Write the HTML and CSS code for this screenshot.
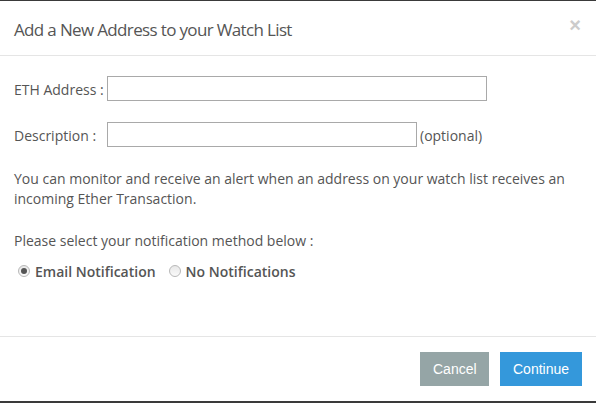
FILE: index.html
```html
<!DOCTYPE html>
<html>
<head>
<meta charset="utf-8">
<link rel="stylesheet" href="styles.css">
</head>
<body>
<div class="modal">
  <div class="modal-header">
    <h4 class="modal-title">Add a New Address to your Watch List</h4>
    <span class="close">&times;</span>
  </div>
  <div class="modal-body">
    <div class="field">
      <label class="lbl">ETH Address :</label>
      <input class="inp inp-long" type="text">
    </div>
    <div class="field">
      <label class="lbl">Description :</label>
      <input class="inp inp-short" type="text">
      <span class="opt">(optional)</span>
    </div>
    <p class="info">You can monitor and receive an alert when an address on your watch list receives an incoming Ether Transaction.</p>
    <p class="select">Please select your notification method below :</p>
    <div class="radios">
      <label class="radio"><span class="dot checked"></span>Email Notification</label>
      <label class="radio"><span class="dot"></span>No Notifications</label>
    </div>
  </div>
  <div class="modal-footer">
    <button class="btn btn-cancel">Cancel</button>
    <button class="btn btn-continue">Continue</button>
  </div>
</div>
</body>
</html>
```
FILE: styles.css
```css
html, body {
  margin: 0;
  padding: 0;
  background: #3a3a3a;
}
body {
  font-family: "Open Sans", "Liberation Sans", sans-serif;
  color: #555;
  width: 596px;
  height: 403px;
  overflow: hidden;
}
.modal {
  margin-top: 1px;
  background: #fff;
  height: 400px;
  display: flex;
  flex-direction: column;
}
.modal-header {
  height: 55px;
  box-sizing: border-box;
  padding: 2px 15px 0 14px;
  border-bottom: 1px solid #e5e5e5;
  display: flex;
  align-items: center;
  justify-content: space-between;
}
.modal-title {
  margin: 0;
  font-size: 17px;
  font-weight: 400;
  color: #555;
  letter-spacing: -0.65px;
}
.close {
  font-family: "Liberation Sans", sans-serif;
  font-size: 20px;
  font-weight: bold;
  color: #cccccc;
  line-height: 1;
  margin-top: -8px;
}
.modal-body {
  flex: 1;
  padding: 20px 14px 0 14px;
  font-size: 14px;
  border-bottom: 1px solid #e5e5e5;
}
.field {
  display: flex;
  align-items: center;
  height: 25px;
  margin-bottom: 21px;
}
.lbl {
  width: 93px;
  flex: none;
  padding-top: 2px;
}
.opt {
  margin-left: 3px;
  padding-top: 2px;
}
.inp {
  box-sizing: border-box;
  height: 25px;
  border: 1px solid #a9a9a9;
  margin: 0;
  padding: 0 4px;
}
.inp-long { width: 380px; }
.inp-short { width: 310px; }
.info {
  margin: 0;
  padding-top: 1px;
  line-height: 20px;
}
.select {
  margin: 22px 0 0 0;
  line-height: 20px;
}
.radios {
  margin-top: 10px;
  display: flex;
  height: 20px;
  align-items: center;
  font-weight: 600;
}
.radio {
  display: flex;
  align-items: center;
  margin-left: 4px;
  margin-right: 9px;
}
.dot {
  box-sizing: border-box;
  width: 12px;
  height: 12px;
  border-radius: 50%;
  border: 1px solid #b8b8b8;
  background: linear-gradient(#e8e8e8, #fafafa);
  margin-right: 5px;
  position: relative;
}
.dot.checked::after {
  content: "";
  position: absolute;
  left: 2px;
  top: 2px;
  width: 6px;
  height: 6px;
  border-radius: 50%;
  background: #555;
}
.modal-footer {
  height: 64px;
  box-sizing: border-box;
  padding: 15px 14px 15px 15px;
  display: flex;
  justify-content: flex-end;
  align-items: flex-start;
  gap: 11px;
}
.btn {
  font-family: "Liberation Sans", Arial, sans-serif;
  font-size: 14px;
  color: #fff;
  border: none;
  height: 34px;
  padding: 0 13px;
  margin: 0;
  border-radius: 0;
}
.btn-cancel {
  background: #95a5a6;
  width: 69px;
}
.btn-continue {
  background: #3498db;
  width: 82px;
}
```
